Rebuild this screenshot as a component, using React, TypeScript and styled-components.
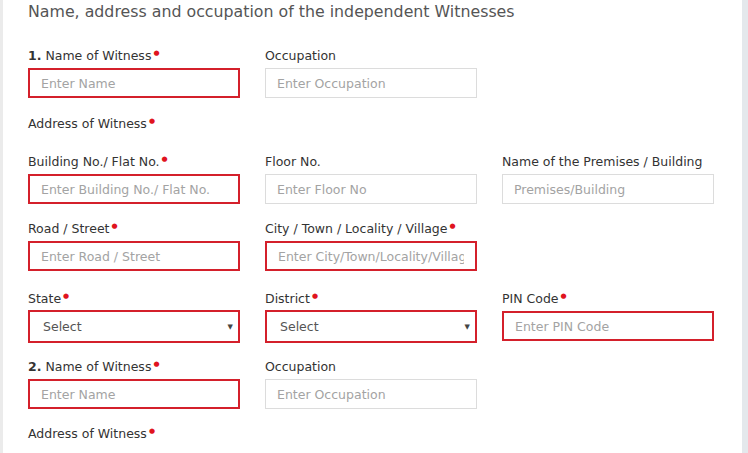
import React from "react";
import styled, { createGlobalStyle } from "styled-components";

const Global = createGlobalStyle`
  html, body { margin: 0; padding: 0; background: #fff; }
  body { font-family: "DejaVu Sans", Verdana, sans-serif; color: #333; }
  * { box-sizing: border-box; }
`;

const Page = styled.div`
  display: flex;
  width: 748px;
  height: 453px;
  overflow: hidden;
  background: #fff;
`;

const LeftStrip = styled.div`
  width: 3px;
  flex: none;
  background: #ebebeb;
`;

const Main = styled.div`
  flex: 1;
  padding-left: 25px;
  display: flex;
  flex-direction: column;
`;

const RightPanel = styled.div`
  width: 6px;
  flex: none;
  background: #e4e8ec;
`;

const Title = styled.h3`
  margin: 0;
  font-size: 15.8px;
  line-height: 24px;
  font-weight: normal;
  color: #555;
  white-space: nowrap;
`;

const Row = styled.div<{ $mt: number }>`
  display: grid;
  grid-template-columns: repeat(3, 212px);
  column-gap: 25px;
  margin-top: ${(p) => p.$mt}px;
`;

const Field = styled.div`
  display: flex;
  flex-direction: column;
`;

const Label = styled.label`
  display: block;
  height: 16px;
  font-size: 12.5px;
  line-height: 16px;
  color: #333;
  white-space: nowrap;
`;

const Num = styled.b`
  font-weight: bold;
`;

const Req = styled.span`
  color: #e0141e;
  font-size: 7px;
  line-height: 0;
  vertical-align: 5px;
  margin-left: 2px;
`;

const Input = styled.input<{ $err?: boolean }>`
  margin-top: 4px;
  width: 212px;
  height: 30px;
  padding: 0 11px;
  border: ${(p) => (p.$err ? "2px solid #d4202b" : "1px solid #dcdcdc")};
  border-radius: 0;
  outline: none;
  font-family: "DejaVu Sans", Verdana, sans-serif;
  font-size: 12.5px;
  color: #555;
  background: #fff;
  &::placeholder { color: #a3a3a3; }
`;

const Select = styled.div`
  margin-top: 3px;
  width: 212px;
  height: 33px;
  padding: 0 5px 0 13px;
  border: 2px solid #d4202b;
  display: flex;
  align-items: center;
  justify-content: space-between;
  font-size: 12.5px;
  color: #555;
`;

const Caret = styled.span`
  font-size: 7px;
  color: #444;
`;

const Section = styled.div<{ $mt: number }>`
  margin-top: ${(p) => p.$mt}px;
  height: 16px;
  font-size: 12.5px;
  line-height: 16px;
  color: #333;
`;

function L({ children, req }: { children: React.ReactNode; req?: boolean }) {
  return (
    <Label>
      {children}
      {req && <Req>●</Req>}
    </Label>
  );
}

export default function App() {
  return (
    <Page>
      <Global />
      <LeftStrip />
      <Main>
        <Title>Name, address and occupation of the independent Witnesses</Title>

        <Row $mt={24}>
          <Field>
            <L req>
              <Num>1.</Num> Name of Witness
            </L>
            <Input $err placeholder="Enter Name" />
          </Field>
          <Field>
            <L>Occupation</L>
            <Input placeholder="Enter Occupation" />
          </Field>
        </Row>

        <Section $mt={18}>
          Address of Witness<Req>●</Req>
        </Section>

        <Row $mt={22}>
          <Field>
            <L req>Building No./ Flat No.</L>
            <Input $err placeholder="Enter Building No./ Flat No." />
          </Field>
          <Field>
            <L>Floor No.</L>
            <Input placeholder="Enter Floor No" />
          </Field>
          <Field>
            <L>Name of the Premises / Building</L>
            <Input placeholder="Premises/Building" />
          </Field>
        </Row>

        <Row $mt={17}>
          <Field>
            <L req>Road / Street</L>
            <Input $err placeholder="Enter Road / Street" />
          </Field>
          <Field>
            <L req>City / Town / Locality / Village</L>
            <Input $err placeholder="Enter City/Town/Locality/Village" />
          </Field>
        </Row>

        <Row $mt={20}>
          <Field>
            <L req>State</L>
            <Select>
              <span>Select</span>
              <Caret>▼</Caret>
            </Select>
          </Field>
          <Field>
            <L req>District</L>
            <Select>
              <span>Select</span>
              <Caret>▼</Caret>
            </Select>
          </Field>
          <Field>
            <L req>PIN Code</L>
            <Input $err placeholder="Enter PIN Code" />
          </Field>
        </Row>

        <Row $mt={16}>
          <Field>
            <L req>
              <Num>2.</Num> Name of Witness
            </L>
            <Input $err placeholder="Enter Name" />
          </Field>
          <Field>
            <L>Occupation</L>
            <Input placeholder="Enter Occupation" />
          </Field>
        </Row>

        <Section $mt={17}>
          Address of Witness<Req>●</Req>
        </Section>
      </Main>
      <RightPanel />
    </Page>
  );
}
